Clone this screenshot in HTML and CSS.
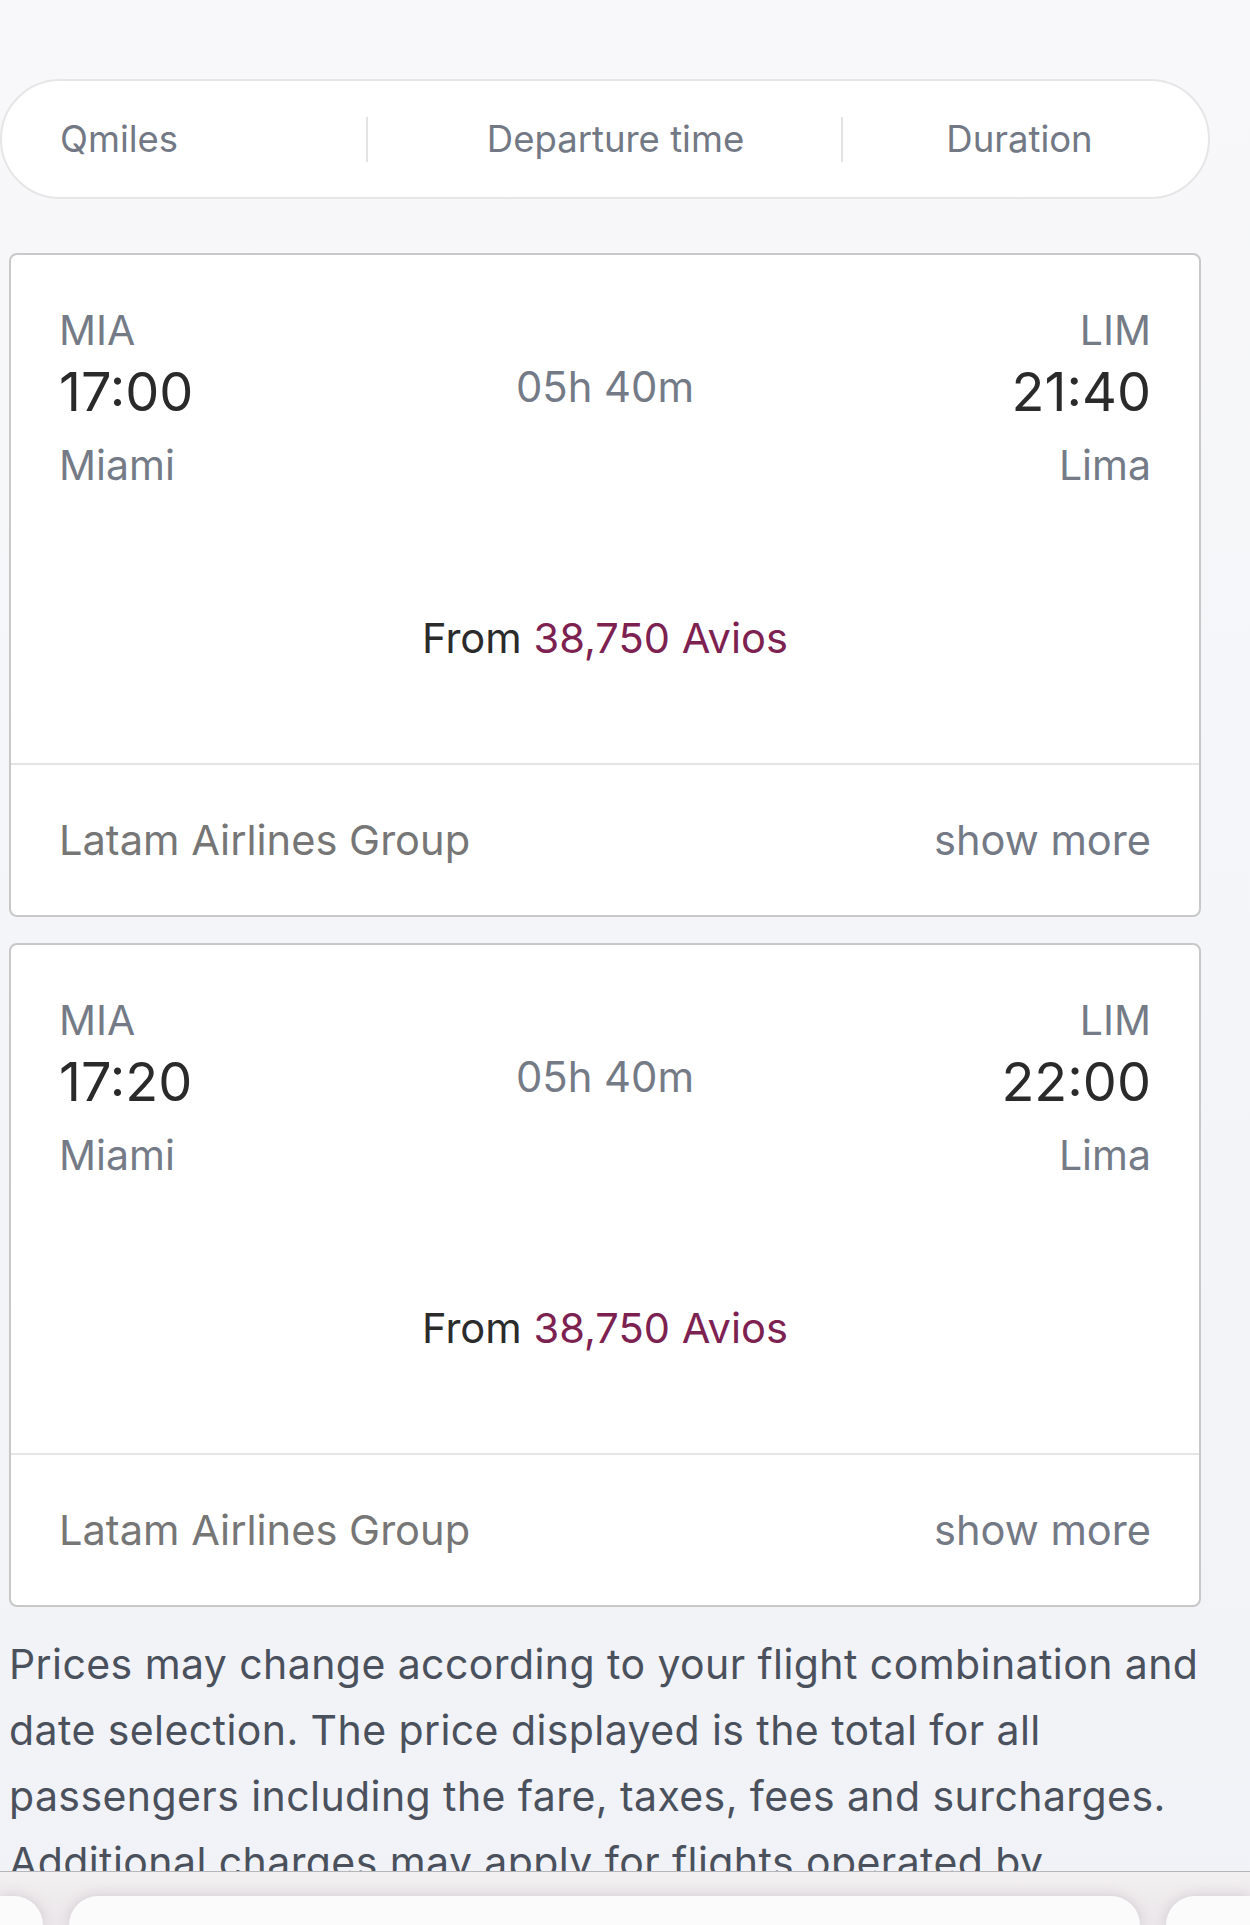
FILE: index.html
```html
<!DOCTYPE html>
<html lang="en">
<head>
<meta charset="utf-8">
<title>Flight results</title>
<link rel="stylesheet" href="styles.css">
</head>
<body>
<main class="page">
  <nav class="sortbar">
    <div class="sort-item sort-q">Qmiles</div>
    <div class="sort-item sort-dep">Departure time</div>
    <div class="sort-item sort-dur">Duration</div>
  </nav>

  <section class="results">
    <article class="card">
      <div class="card-main">
        <div class="route">
          <div class="end">
            <div class="code">MIA</div>
            <div class="time">17:00</div>
            <div class="city">Miami</div>
          </div>
          <div class="dur">05h 40m</div>
          <div class="end end-right">
            <div class="code">LIM</div>
            <div class="time">21:40</div>
            <div class="city">Lima</div>
          </div>
        </div>
        <div class="price">From <span class="avios">38,750 Avios</span></div>
      </div>
      <div class="card-foot">
        <span class="airline">Latam Airlines Group</span>
        <span class="more">show more</span>
      </div>
    </article>

    <article class="card">
      <div class="card-main">
        <div class="route">
          <div class="end">
            <div class="code">MIA</div>
            <div class="time">17:20</div>
            <div class="city">Miami</div>
          </div>
          <div class="dur">05h 40m</div>
          <div class="end end-right">
            <div class="code">LIM</div>
            <div class="time">22:00</div>
            <div class="city">Lima</div>
          </div>
        </div>
        <div class="price">From <span class="avios">38,750 Avios</span></div>
      </div>
      <div class="card-foot">
        <span class="airline">Latam Airlines Group</span>
        <span class="more">show more</span>
      </div>
    </article>
  </section>

  <p class="note">Prices may change according to your flight combination and date selection. The price displayed is the total for all passengers including the fare, taxes, fees and surcharges. Additional charges may apply for flights operated by codeshare partners.</p>
</main>

<div class="toolbar">
  <div class="tab tab-l"></div>
  <div class="tab tab-m"></div>
  <div class="tab tab-r"></div>
</div>
</body>
</html>
```

FILE: styles.css
```css
html, body {
  margin: 0;
  padding: 0;
}

body {
  background: linear-gradient(180deg, #f8f8fa 0%, #f4f5f8 50%, #f1f2f7 100%);
  font-family: "Inter", "Noto Sans", "Liberation Sans", sans-serif;
  min-height: 1925px;
}

.page {
  padding-top: 79px;
}

/* sort bar */
.sortbar {
  box-sizing: border-box;
  width: 1210px;
  height: 120px;
  background: #ffffff;
  border: 2px solid #e6e6e7;
  border-radius: 60px;
  display: grid;
  grid-template-columns: 364px 475px 1fr;
  align-items: center;
}

.sort-item {
  box-sizing: border-box;
  height: 45px;
  display: flex;
  align-items: center;
  font-size: 36.5px;
  color: #727985;
  white-space: nowrap;
}

.sort-q {
  padding-left: 58px;
}

.sort-dep {
  border-left: 2px solid #e3e3e5;
  justify-content: center;
  padding-left: 22px;
}

.sort-dur {
  border-left: 2px solid #e3e3e5;
  justify-content: center;
  padding-right: 12px;
}

/* cards */
.results {
  margin-top: 54px;
  margin-left: 9px;
  width: 1192px;
  display: flex;
  flex-direction: column;
  gap: 26px;
}

.card {
  background: #ffffff;
  border: 2px solid #c8c8c9;
  border-radius: 8px;
  overflow: hidden;
}

.card-main {
  padding: 50px 48px 100px 48px;
}

.route {
  display: grid;
  grid-template-columns: 1fr auto 1fr;
  align-items: start;
}

.end {
  display: flex;
  flex-direction: column;
  align-items: flex-start;
}

.end-right {
  align-items: flex-end;
}

.code {
  font-size: 41px;
  line-height: 50px;
  color: #747b87;
}

.time {
  font-size: 54px;
  line-height: 74px;
  color: #2a2a2a;
}

.city {
  font-size: 41px;
  line-height: 72px;
  color: #747b87;
}

.dur {
  margin-top: 57px;
  font-size: 41.8px;
  line-height: 50px;
  color: #747b87;
  white-space: nowrap;
}

.price {
  margin-top: 112px;
  text-align: center;
  font-size: 41.6px;
  line-height: 50px;
  color: #2b2b2b;
}

.avios {
  color: #7d2151;
}

.card-foot {
  box-sizing: border-box;
  height: 152px;
  border-top: 2px solid #e5e5e6;
  padding: 0 48px 0 48px;
  display: flex;
  justify-content: space-between;
  align-items: center;
  font-size: 41.6px;
}

.airline {
  color: #767676;
}

.more {
  color: #737985;
}

/* note */
.note {
  margin: 24px 0 0 9px;
  width: 1200px;
  font-size: 41px;
  letter-spacing: 0.42px;
  line-height: 66px;
  color: #4a515c;
}

/* browser toolbar */
.toolbar {
  position: fixed;
  left: 0;
  right: 0;
  bottom: 0;
  height: 54px;
  box-sizing: border-box;
  border-top: 1px solid #b6b6b8;
  background: linear-gradient(180deg, #f2f0f1 0%, #ebe7ea 100%);
  display: flex;
  align-items: flex-end;
  gap: 26px;
  overflow: hidden;
}

.tab {
  height: 29px;
  background: #fbfbfb;
  box-shadow: 0 0 14px rgba(120, 100, 115, 0.25);
}

.tab-l {
  flex: 0 0 43px;
  border-radius: 0 36px 0 0;
}

.tab-m {
  flex: 0 0 1071px;
  border-radius: 36px 36px 0 0;
}

.tab-r {
  flex: 1 1 auto;
  border-radius: 36px 0 0 0;
}
```
